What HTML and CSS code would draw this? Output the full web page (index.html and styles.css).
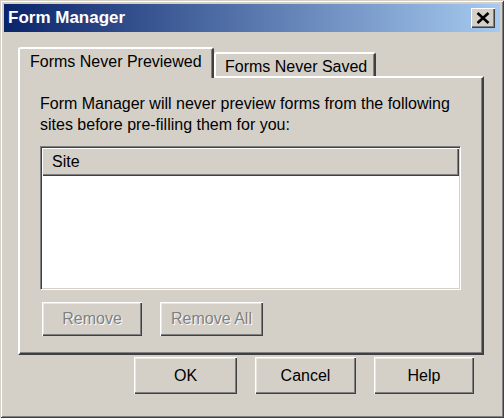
FILE: index.html
```html
<!DOCTYPE html>
<html>
<head>
<meta charset="utf-8">
<link rel="stylesheet" href="styles.css">
</head>
<body>
<div class="window">
  <div class="titlebar">
    <span class="title">Form Manager</span>
    <div class="close">
      <svg width="14" height="12" viewBox="0 0 14 12"><path d="M1.5 1 L12.5 11 M12.5 1 L1.5 11" stroke="#000" stroke-width="2.6" fill="none"/></svg>
    </div>
  </div>
  <div class="body">
    <div class="tabs">
      <div class="tab active">Forms Never Previewed</div>
      <div class="tab">Forms Never Saved</div>
    </div>
    <div class="panel">
      <p class="desc">Form Manager will never preview forms from the following sites before pre-filling them for you:</p>
      <div class="listbox">
        <div class="header">Site</div>
      </div>
      <div class="panel-buttons">
        <div class="btn disabled remove">Remove</div>
        <div class="btn disabled remove-all">Remove All</div>
      </div>
    </div>
    <div class="dialog-buttons">
      <div class="btn ok">OK</div>
      <div class="btn cancel">Cancel</div>
      <div class="btn help">Help</div>
    </div>
  </div>
</div>
</body>
</html>
```
FILE: styles.css
```css
html, body {
  margin: 0;
  padding: 0;
  background: #d4d0c8;
}
.window {
  width: 504px;
  height: 418px;
  box-sizing: border-box;
  padding: 4px;
  background: #d4d0c8;
  box-shadow: inset 1px 1px #d4d0c8, inset -1px -1px #404040, inset 2px 2px #ffffff, inset -2px -2px #808080;
  font-family: "Liberation Sans", Arial, sans-serif;
  font-size: 16px;
  color: #000;
  display: flex;
  flex-direction: column;
}
.titlebar {
  height: 28px;
  flex: none;
  display: flex;
  align-items: center;
  justify-content: space-between;
  padding: 0 5px 0 4px;
  background: linear-gradient(to right, #0a246a, #a6caf0);
}
.title {
  color: #fff;
  font-weight: bold;
  font-size: 17px;
}
.close {
  width: 24px;
  height: 20px;
  box-sizing: border-box;
  background: #d4d0c8;
  box-shadow: inset 1px 1px #ffffff, inset -1px -1px #404040, inset -2px -2px #808080;
  display: flex;
  align-items: center;
  justify-content: center;
}
.close svg {
  display: block;
  margin-left: -1px;
}
.body {
  padding: 15px 16px 0 14px;
}
.tabs {
  display: flex;
  align-items: flex-end;
  height: 29px;
  position: relative;
  z-index: 1;
}
.tab {
  box-sizing: border-box;
  width: 162px;
  height: 24px;
  padding: 4px 0 0 9px;
  background: #d4d0c8;
  border-top: 2px solid #ffffff;
  border-left: 2px solid #ffffff;
  border-right: 2px solid #404040;
  box-shadow: inset -1px 0 #808080;
  border-radius: 3px 3px 0 0;
  white-space: nowrap;
}
.tab.active {
  width: 196px;
  height: 31px;
  margin-bottom: -2px;
  padding: 4px 0 0 10px;
}
.panel {
  box-sizing: border-box;
  width: 466px;
  height: 279px;
  padding: 15px 0 0 20px;
  border-top: 2px solid #ffffff;
  border-left: 2px solid #ffffff;
  border-right: 2px solid #404040;
  border-bottom: 2px solid #404040;
  box-shadow: inset -1px -1px #808080;
}
.desc {
  margin: 0;
  line-height: 21px;
  width: 430px;
}
.listbox {
  box-sizing: border-box;
  width: 421px;
  height: 144px;
  margin-top: 11px;
  background: #ffffff;
  border-top: 1px solid #808080;
  border-left: 1px solid #808080;
  border-right: 1px solid #ffffff;
  border-bottom: 1px solid #ffffff;
  box-shadow: inset 1px 1px #404040, inset -1px -1px #d4d0c8;
  padding: 1px;
}
.header {
  box-sizing: border-box;
  height: 28px;
  background: #d4d0c8;
  padding: 4px 0 0 10px;
  box-shadow: inset 1px 1px #ffffff, inset -1px -1px #404040, inset -2px -2px #808080;
  line-height: 20px;
}
.panel-buttons {
  display: flex;
  gap: 18px;
  margin: 12px 0 0 2px;
}
.btn {
  box-sizing: border-box;
  height: 34px;
  display: flex;
  align-items: center;
  justify-content: center;
  background: #d4d0c8;
  box-shadow: inset 1px 1px #ffffff, inset -1px -1px #404040, inset -2px -2px #808080, inset 2px 2px #e8e6e0;
}
.btn.disabled {
  color: #808080;
  text-shadow: 1px 1px #ffffff;
}
.remove {
  width: 100px;
}
.remove-all {
  width: 103px;
}
.dialog-buttons {
  display: flex;
  justify-content: flex-end;
  gap: 18px;
  margin-top: 2px;
  padding-right: 10px;
}
.dialog-buttons .btn {
  height: 37px;
}
.ok {
  width: 103px;
}
.cancel {
  width: 101px;
}
.help {
  width: 100px;
}
```
